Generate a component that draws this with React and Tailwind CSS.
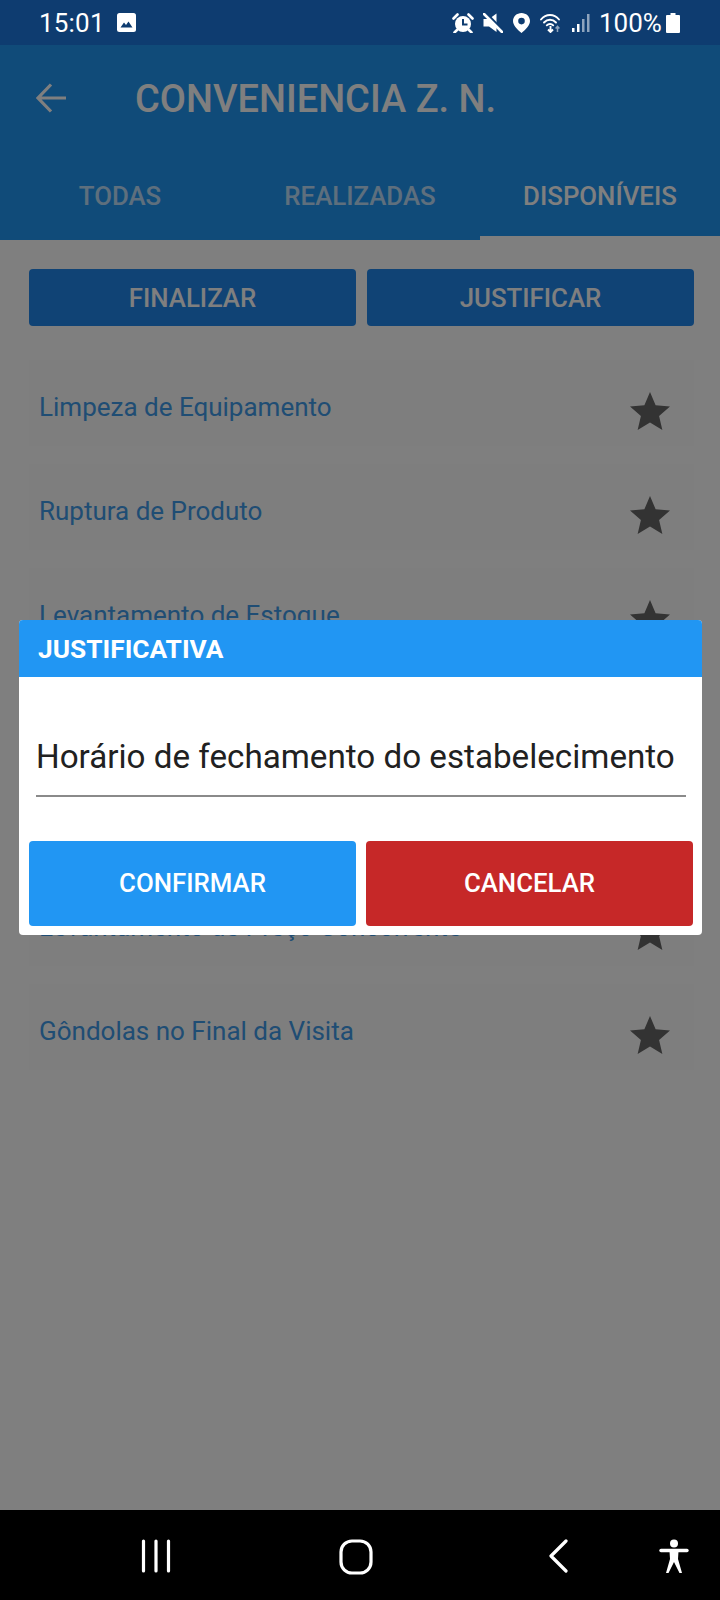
const items = [
  "Limpeza de Equipamento",
  "Ruptura de Produto",
  "Levantamento de Estoque",
  "Exposição de Produto",
  "Validade de Produto",
  "Levantamento de Preço Concorrente",
  "Gôndolas no Final da Visita",
];

function Star() {
  return (
    <svg viewBox="0 0 24 24" className="h-[48px] w-[48px] shrink-0" fill="#666666">
      <polygon points="12,17.27 18.18,21 16.54,13.97 22,9.24 14.81,8.63 12,2 9.19,8.63 2,9.24 7.46,13.97 5.82,21" />
    </svg>
  );
}

function StatusBar() {
  return (
    <div className="relative z-20 flex h-[45px] shrink-0 items-center bg-[#0e3c70] pl-[39px] text-white">
      <span className="w-[78px] text-[26px] leading-none tracking-[0.2px]">15:01</span>
      <svg viewBox="0 0 19 19" className="h-[19px] w-[19px]">
        <rect width="19" height="19" rx="2.5" fill="#fff" />
        <path d="M3.5 14.5 L7 9.5 L9 12 L11.5 8.5 L15.5 14.5 Z" fill="#0e3c70" />
      </svg>
      <div className="ml-[316px] flex items-center">
        <svg viewBox="0 0 22 20" className="h-[20px] w-[22px]">
          <circle cx="11" cy="11" r="8" fill="#fff" />
          <path d="M11 6 V11.500 H15.500" fill="none" stroke="#0e3c70" strokeWidth="2" />
          <path d="M1.500 5.500 L5.500 1.500 M20.500 5.500 L16.500 1.500 M5 17 L2.500 19.500 M17 17 L19.500 19.500" stroke="#fff" strokeWidth="2.6" strokeLinecap="round" />
        </svg>
        <svg viewBox="0 0 20 20" className="ml-[9px] h-[20px] w-[20px]">
          <path d="M0.500 6 H6 L13.500 0.500 V19 L6 13.500 H0.500 Z" fill="#fff" />
          <path d="M3 0 L20 17.500" stroke="#0e3c70" strokeWidth="2.500" />
          <path d="M1 1 L19 19" stroke="#fff" strokeWidth="2.600" strokeLinecap="round" />
        </svg>
        <svg viewBox="0 0 17 20" className="ml-[10px] h-[20px] w-[17px]">
          <path fillRule="evenodd" d="M8.500 0 C13.200 0 17 3.600 17 8 C17 12.600 12.300 16.800 8.500 20 C4.700 16.800 0 12.600 0 8 C0 3.600 3.800 0 8.500 0 Z M8.500 4.800 A3.300 3.300 0 1 0 8.500 11.400 A3.300 3.300 0 1 0 8.500 4.800 Z" fill="#fff" />
        </svg>
        <svg viewBox="0 0 22 20" className="ml-[10px] h-[20px] w-[22px]">
          <g fill="none" stroke="#fff" strokeWidth="1.900" strokeLinecap="round">
            <path d="M1 6.500 C6 0.500 14 0.500 19 6.500" />
            <path d="M4 9.500 C7.500 5.800 12.500 5.800 16 9.500" />
            <path d="M6.800 12.300 C8.500 10.500 11.500 10.500 13.200 12.300" />
          </g>
          <path d="M10.500 13 V19 M8 16.500 L10.500 19 L13 16.500" fill="none" stroke="#fff" strokeWidth="1.900" />
          <path d="M17.500 19 V13.500 M15.600 15.500 L17.500 13.300 L19.400 15.500" fill="none" stroke="#8ea4bd" strokeWidth="1.500" />
        </svg>
        <svg viewBox="0 0 18 18" className="ml-[10px] h-[18px] w-[18px]">
          <rect x="0" y="14" width="2.500" height="4" fill="#fff" />
          <rect x="5" y="10" width="2.500" height="8" fill="#fff" />
          <rect x="10" y="5" width="2.500" height="13" fill="#8ea4bd" />
          <rect x="15" y="0" width="2.500" height="18" fill="#8ea4bd" />
        </svg>
        <span className="ml-[9px] w-[63px] text-[26px] leading-none">100%</span>
        <svg viewBox="0 0 14 20" className="ml-[4px] h-[20px] w-[14px]">
          <path d="M4.500 0 H9.500 V2 H13 A1 1 0 0 1 14 3 V19 A1 1 0 0 1 13 20 H1 A1 1 0 0 1 0 19 V3 A1 1 0 0 1 1 2 H4.500 Z" fill="#fff" />
        </svg>
      </div>
    </div>
  );
}

function NavBar() {
  return (
    <div className="relative z-20 flex h-[90px] shrink-0 items-start bg-black pl-[140px] pt-[29px]">
      <svg viewBox="0 0 32 34" className="h-[34px] w-[32px]">
        <path d="M3.500 2 V32 M16 2 V32 M28.500 2 V32" stroke="#fff" strokeWidth="3.200" strokeLinecap="round" />
      </svg>
      <svg viewBox="0 0 34 36" className="ml-[167px] h-[36px] w-[34px]">
        <rect x="2" y="2" width="30" height="32" rx="11" fill="none" stroke="#fff" strokeWidth="3.200" />
      </svg>
      <svg viewBox="0 0 20 34" className="ml-[175px] h-[34px] w-[20px]">
        <path d="M18 2 L3 17 L18 32" fill="none" stroke="#fff" strokeWidth="3.200" strokeLinecap="round" strokeLinejoin="round" />
      </svg>
      <svg viewBox="0 0 30 36" className="ml-[91px] h-[36px] w-[30px]">
        <circle cx="15" cy="4.500" r="4" fill="#fff" />
        <path d="M2 11.500 H28" stroke="#fff" strokeWidth="3.400" strokeLinecap="round" />
        <path d="M10.500 12 H19.500 L19 20 L23 34 H20.500 L15 23 L9.500 34 H7 L11 20 Z" fill="#fff" />
      </svg>
    </div>
  );
}

export default function App() {
  return (
    <div className="relative flex h-[1600px] w-[720px] flex-col overflow-hidden bg-white font-['Roboto',sans-serif]">
      <StatusBar />

      <header className="flex h-[195px] shrink-0 flex-col bg-[#2196f3] text-white">
        <div className="flex h-[106px] items-center pl-[36px]">
          <svg viewBox="0 0 30 30" className="h-[30px] w-[30px]">
            <path d="M30 15 H2 M15 1.500 L2 15 L15 28.500" fill="none" stroke="#fff" strokeWidth="3.200" />
          </svg>
          <h1 className="ml-[69px] pt-[2px] text-[38px] font-medium leading-none">CONVENIENCIA Z. N.</h1>
        </div>
        <div className="flex h-[89px]">
          <div className="flex w-[240px] items-center justify-center pt-[2px] text-[25.800px] font-medium opacity-70">TODAS</div>
          <div className="flex w-[240px] items-center justify-center pt-[2px] text-[25.800px] font-medium opacity-70">REALIZADAS</div>
          <div className="flex w-[240px] items-center justify-center border-b-4 border-white pt-[6px] text-[25.800px] font-medium">DISPONÍVEIS</div>
        </div>
      </header>

      <main className="flex min-h-0 flex-1 flex-col pl-[29px] pr-[26px] pt-[29px]">
        <div className="flex gap-[11px]">
          <div className="flex h-[57px] flex-1 items-center justify-center rounded-[4px] bg-[#2086ea] pt-[2px] text-[25.800px] font-medium text-white">FINALIZAR</div>
          <div className="flex h-[57px] flex-1 items-center justify-center rounded-[4px] bg-[#2086ea] pt-[2px] text-[25.800px] font-medium text-white">JUSTIFICAR</div>
        </div>
        <div className="mt-[34px] flex flex-col gap-[18px]">
          {items.map((t) => (
            <div key={t} className="flex h-[86px] items-center justify-between bg-[#fcfcfc] pl-[10px] pr-[20px]">
              <span className="pt-[8px] text-[26px] leading-none text-[#3f9ae8]">{t}</span>
              <span className="pt-[18px]"><Star /></span>
            </div>
          ))}
        </div>
      </main>

      <NavBar />

      <div className="absolute inset-x-0 bottom-[90px] top-0 z-10 bg-black/50" />

      <div className="absolute left-[19px] top-[620px] z-20 w-[683px] overflow-hidden rounded-[4px] bg-white">
        <div className="flex h-[57px] items-center bg-[#2196f3] pl-[19px] pt-[3px] text-[26.300px] font-bold text-white">JUSTIFICATIVA</div>
        <div className="ml-[17px] mr-[16px] mt-[52px] border-b-2 border-[#8a8a8a] pb-[10px] text-[33.200px] leading-[56px] text-[#212121]">Horário de fechamento do estabelecimento</div>
        <div className="mt-[44px] flex gap-[10px] pb-[9px] pl-[10px] pr-[9px]">
          <div className="flex h-[85px] flex-1 items-center justify-center rounded-[4px] bg-[#2196f3] text-[25.800px] font-medium text-white">CONFIRMAR</div>
          <div className="flex h-[85px] flex-1 items-center justify-center rounded-[4px] bg-[#c62828] text-[25.800px] font-medium text-white">CANCELAR</div>
        </div>
      </div>
    </div>
  );
}
